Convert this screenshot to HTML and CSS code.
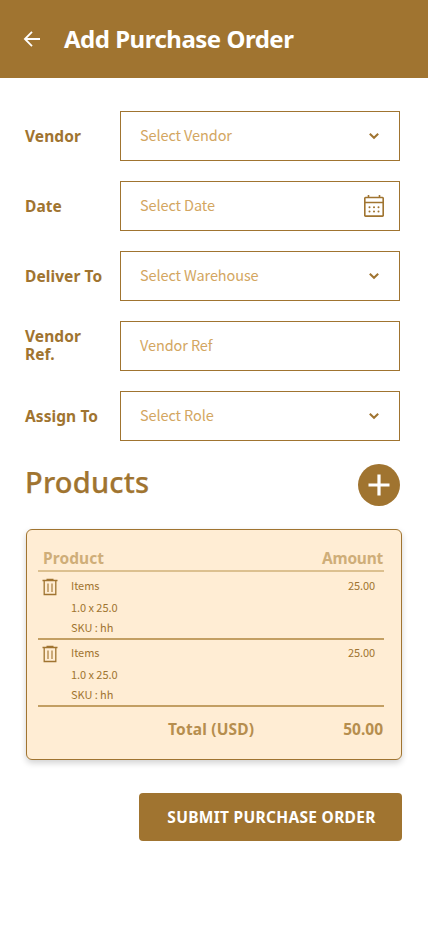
FILE: index.html
```html
<!DOCTYPE html>
<html lang="en">
<head>
<meta charset="utf-8">
<meta name="viewport" content="width=device-width, initial-scale=1">
<title>Add Purchase Order</title>
<link rel="stylesheet" href="styles.css">
</head>
<body>
<header class="topbar">
  <svg class="back" viewBox="0 0 18 18"><path d="M17 9H2.200M9 1.800L1.900 9 9 16.200"/></svg>
  <h1 class="title">Add Purchase Order</h1>
</header>
<main class="page">
  <div class="form">
    <div class="field"><span class="label">Vendor</span>
      <div class="input"><span>Select Vendor</span><svg class="chevron" viewBox="0 0 12 8"><path d="M1.800 1.700L6 5.800l4.200-4.100"/></svg></div></div>
    <div class="field"><span class="label">Date</span>
      <div class="input"><span>Select Date</span>
        <svg class="calendar" viewBox="0 0 20 22"><path d="M1.500 2.500h17a.7.7 0 0 1 .7.7v17.200a.7.7 0 0 1-.7.7h-17a.7.7 0 0 1-.7-.7V3.200a.7.7 0 0 1 .7-.7zM.8 7.500h18.400M4.500 0v2.500M15.500 0v2.500"/><path class="dots" d="M5.500 12.200h.01M10 12.200h.01M14.500 12.200h.01M5.500 16.600h.01M10 16.600h.01M14.500 16.600h.01"/></svg></div></div>
    <div class="field"><span class="label">Deliver To</span>
      <div class="input"><span>Select Warehouse</span><svg class="chevron" viewBox="0 0 12 8"><path d="M1.800 1.700L6 5.800l4.200-4.100"/></svg></div></div>
    <div class="field"><span class="label label-wrap">Vendor Ref.</span>
      <div class="input"><span>Vendor Ref</span></div></div>
    <div class="field"><span class="label">Assign To</span>
      <div class="input"><span>Select Role</span><svg class="chevron" viewBox="0 0 12 8"><path d="M1.800 1.700L6 5.800l4.200-4.100"/></svg></div></div>
  </div>
  <div class="products">
    <h2 class="heading">Products</h2>
    <svg class="add" viewBox="0 0 42 42"><circle cx="21" cy="21" r="21"/><path d="M21 10.500v21M10.500 21h21"/></svg>
  </div>
  <section class="card">
    <div class="card-head"><span>Product</span><span class="amount-head">Amount</span></div>
    <div class="item">
      <svg class="trash" viewBox="0 0 16 18"><path d="M.5 2.500h15M4.500 1.300h7M2.200 3v13.500h11.600V3"/><path class="bars" d="M6 5.500v8.500M10 5.500v8.500"/></svg>
      <div class="details"><p class="name">Items</p><p>1.0 x 25.0</p><p>SKU : hh</p></div>
      <span class="price">25.00</span>
    </div>
    <div class="item">
      <svg class="trash" viewBox="0 0 16 18"><path d="M.5 2.500h15M4.500 1.300h7M2.200 3v13.500h11.600V3"/><path class="bars" d="M6 5.500v8.500M10 5.500v8.500"/></svg>
      <div class="details"><p class="name">Items</p><p>1.0 x 25.0</p><p>SKU : hh</p></div>
      <span class="price">25.00</span>
    </div>
    <div class="total"><span class="total-label">Total (USD)</span><span>50.00</span></div>
  </section>
  <button class="submit">SUBMIT PURCHASE ORDER</button>
</main>
</body>
</html>
```

FILE: styles.css
```css
* { box-sizing: border-box; margin: 0; padding: 0; }
body { background: #fff; color: #a07430; font-family: "Noto Sans", sans-serif; }
svg { display: block; flex: none; fill: none; stroke: #a07430; }
.topbar { height: 78px; background: #a07430; display: flex; align-items: center; padding-left: 23px; gap: 23px; }
.back { width: 18px; height: 18px; stroke: #fff; stroke-width: 1.8; }
.title { color: #fff; font-size: 24px; line-height: 32px; font-weight: 700; letter-spacing: -0.5px; white-space: nowrap; }
.page { padding: 33px 26px 0; }
.form { display: grid; gap: 20px; margin: 0 2px 0 -1px; }
.field { display: grid; grid-template-columns: 95px 280px; height: 50px; align-items: center; }
.label { font-size: 15.5px; line-height: 18px; font-weight: 700; letter-spacing: .08px; }
.label-wrap { width: 70px; margin-top: -2px; }
.input { height: 50px; border: 1px solid #a07430; display: flex; align-items: center; justify-content: space-between; padding: 0 15px 0 19px; color: #d3a661; font: 14.5px/20px "Noto Sans CJK SC", sans-serif; letter-spacing: -.1px; }
.input span { margin-bottom: 2px; }
.chevron { width: 12px; height: 8px; margin-right: 4px; stroke-width: 2; }
.calendar { width: 20px; height: 22px; stroke-width: 1.600; }
.dots { stroke-width: 2; stroke-linecap: round; }
.products { display: flex; justify-content: space-between; margin: 23px 2px 0 -1px; height: 42px; }
.heading { font-size: 29px; line-height: 35px; font-weight: 500; letter-spacing: .2px; -webkit-text-stroke: .25px #a07430; }
.add { width: 42px; height: 42px; }
.add circle { fill: #a07430; stroke: none; }
.add path { stroke: #fff; stroke-width: 3.200; }
.card { margin-top: 23px; height: 231px; border: 1px solid #a07430; border-radius: 6px; background: #ffedd4; padding: 17px 17px 0 11px; box-shadow: 0 3px 6px rgba(0,0,0,.18); }
.card-head { height: 25px; padding: 0 1px 0 5px; display: flex; justify-content: space-between; border-bottom: 2px solid #dcc08f; color: #cfae79; font-size: 15.5px; line-height: 22px; font-weight: 700; letter-spacing: .08px; }
.amount-head { letter-spacing: -.25px; }
.item { height: 67.5px; display: flex; border-bottom: 2px solid #c39f63; padding: 5px 9px 0 4px; font: 11px/20px "Noto Sans CJK SC", sans-serif; letter-spacing: -.05px; }
.item + .item { padding-top: 4.5px; }
.trash { width: 16px; height: 18px; stroke-width: 1.300; margin-top: 1px; }
.bars { stroke-width: 1.500; opacity: .75; }
.details { flex: 1; margin: -2px 0 0 13px; }
.name { margin-bottom: 2px; }
.price { margin-top: -2px; letter-spacing: -.1px; }
.total { display: flex; justify-content: space-between; padding: 10px 1px 0 130px; color: #b68e4e; font-size: 15.5px; line-height: 24px; font-weight: 700; }
.total-label { letter-spacing: .18px; }
.submit { display: block; margin: 33px 0 0 auto; width: 263px; height: 48px; border: 0; border-radius: 4px; padding-left: 2px; background: #a07430; color: #fff; font: 700 15.500px/24px "Noto Sans", sans-serif; letter-spacing: .3px; white-space: nowrap; }
```
